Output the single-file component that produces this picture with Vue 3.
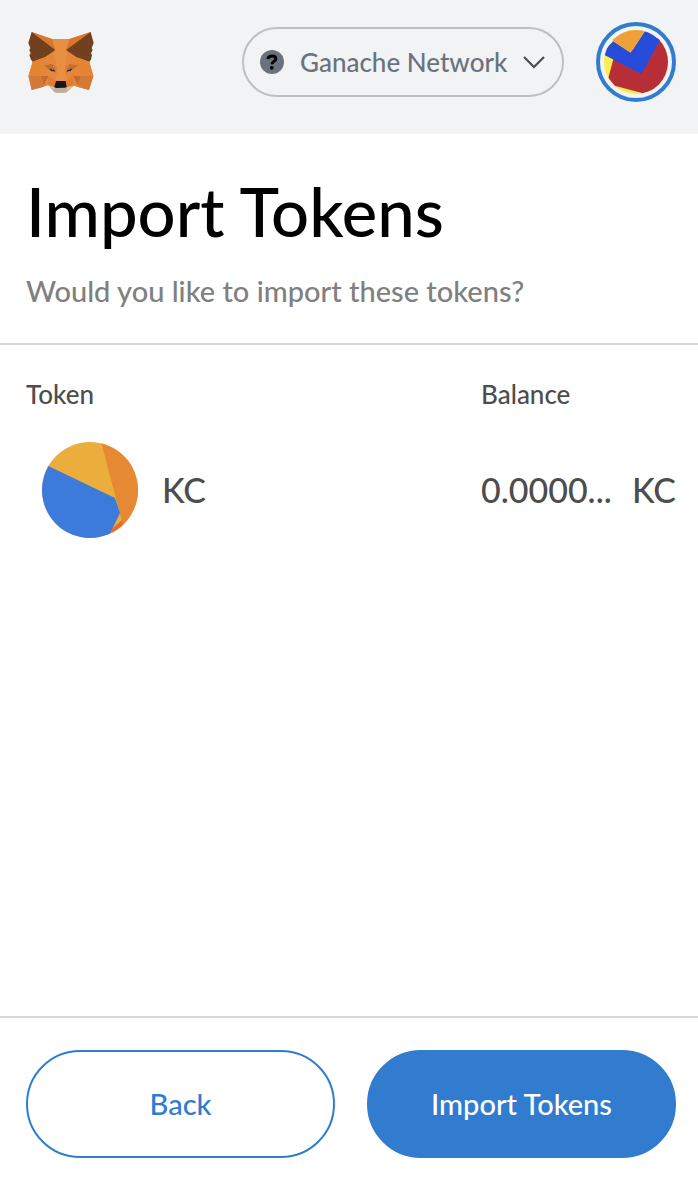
<script setup>
const tokens = [{ symbol: 'KC', balance: '0.0000...' }]
</script>

<template>
  <div class="popup">
    <header class="bar">
      <a class="logo" href="#" aria-label="Home">
        <svg viewBox="30 33 204 186" width="68" height="62" aria-hidden="true">
          <path fill="#e4873a" d="M47 36 108 57H160L224 36 220 125 232 168 219 210 172 197 152 217H116L97 196 47 210 37 168 50 125Z" />
          <path fill="#e88f43" d="M108 57H160L148 140 152 182H118L122 140Z" />
          <path fill="#d9772f" d="M47 36 108 57 118 90ZM224 36 160 57 150 90Z" />
          <path fill="#70401f" d="M47 36 118 90 86 112 50 125 45 119 40 105 44 100 40 90 43 84 37 69ZM224 36 150 90 182 112 220 125 225 119 228 105 225 100 230 90 227 84 233 69Z" />
          <path fill="#e58532" d="M50 125 86 112 82 136 75 168 38 168ZM220 125 182 112 187 136 195 168H232Z" />
          <path fill="#d57a36" d="M38 168H75L84 200 47 210ZM232 168H195L185 200 219 210Z" />
          <path fill="#c56b30" d="M75 168H97L84 196ZM195 168H172L185 196Z" />
          <path fill="#df7d35" d="M97 168 118 182 116 200 97 196ZM172 168 152 182 153 200 172 197Z" />
          <path fill="#c66e32" d="M82 136 110 132 121 160 116 154 97 147ZM187 136 160 132 149 160 154 154 173 147Z" />
          <path fill="#d9783a" d="M110 132 122 140 121 164ZM160 132 148 140 149 164Z" />
          <path fill="#263347" d="M99 146 112 147 118 155 105 153ZM170 146 157 147 151 155 164 153Z" />
          <path fill="#8999a1" d="M106 147H112L111 151ZM163 147H157L158 151Z" />
          <path fill="#d6c6b6" d="M97 196 115 202H153L172 197 153 213 149 218H120L115 212Z" />
          <path fill="#bfae9e" d="M115 203H153L154 212 148 218H120L114 212Z" />
          <path fill="#161616" d="M120 183H149L152 201 148 203 119 204 115 201Z" />
        </svg>
      </a>
      <button class="network" type="button" aria-haspopup="listbox">
        <svg class="help" viewBox="0 0 24 24" width="24" height="24" aria-hidden="true">
          <circle cx="12" cy="12" r="12" fill="#6a737d" />
          <path d="M7.8 9C8.3 6.8 9.8 6.1 12 6.1 14.4 6.1 15.9 7.2 15.9 9 15.9 11.4 12 11.2 12 14.2" fill="none" stroke="#000" stroke-width="3" />
          <circle cx="11.8" cy="17.8" r="1.9" />
        </svg>
        <span class="network-name">Ganache Network</span>
        <svg viewBox="0 0 24 14" width="24" height="14" aria-hidden="true">
          <path d="M2 2 12 12 22 2" fill="none" stroke="#4d4d4d" stroke-width="2.2" />
        </svg>
      </button>
      <button class="account" type="button" aria-label="Account menu">
        <svg viewBox="48 48 192 192" width="64" height="64" aria-hidden="true">
          <path fill="#f8ef4e" d="M48 48H240V240H48Z" />
          <path fill="#b82e36" d="M76 136 215 70 250 90V250H180L165 238 80 215 61 192Z" />
          <path fill="#274cda" d="M40 118 76 82 128 116 173 48 230 54 160 180Z" />
          <path fill="#efa139" d="M68 76 128 116 178 40H90Z" />
        </svg>
      </button>
    </header>

    <section class="intro">
      <h1>Import Tokens</h1>
      <p>Would you like to import these tokens?</p>
    </section>

    <main class="content">
      <table class="tokens">
        <thead>
          <tr>
            <th scope="col">Token</th>
            <th class="balance" scope="col">Balance</th>
          </tr>
        </thead>
        <tbody>
          <tr v-for="token in tokens" :key="token.symbol">
            <td>
              <div class="token">
                <svg viewBox="0 0 96 96" width="96" height="96" aria-hidden="true">
                  <path fill="#ebad3c" d="M0 0H96V96H0Z" />
                  <path fill="#e58a32" d="M58 -4H96V96H84L80 79Z" />
                  <path fill="#3c7adb" d="M-4 19 73 56 78 71 66 96H-4Z" />
                  <path fill="#eb672d" d="M71 86 80 78 84 96H66Z" />
                </svg>
                <span>{{ token.symbol }}</span>
              </div>
            </td>
            <td class="balance">
              <div class="amount">
                <span>{{ token.balance }}</span>
                <span>{{ token.symbol }}</span>
              </div>
            </td>
          </tr>
        </tbody>
      </table>
    </main>

    <footer class="actions">
      <button class="action secondary" type="button">Back</button>
      <button class="action primary" type="button">Import Tokens</button>
    </footer>
  </div>
</template>

<style>
body {
  margin: 0;
  background: #fff;
}
</style>

<style scoped>
.popup {
  display: flex;
  flex-direction: column;
  box-sizing: border-box;
  min-height: 100vh;
  font-family: Lato, "Open Sans", sans-serif;
  font-weight: 500;
  color: #4d4d4d;
}

button {
  box-sizing: border-box;
  margin: 0;
  font-family: inherit;
  font-weight: inherit;
  cursor: pointer;
}

svg {
  display: block;
  flex: none;
}

.bar {
  display: flex;
  align-items: center;
  gap: 32px;
  padding: 22px 22px 32px 26px;
  background: #f2f3f4;
}

.logo {
  margin-right: auto;
}

.network {
  display: flex;
  align-items: center;
  width: 322px;
  height: 70px;
  padding: 0 16px;
  border: 2px solid #bbc0c5;
  border-radius: 35px;
  background: transparent;
  color: #6a737d;
  font-size: 26px;
  line-height: 36px;
}

.network-name {
  flex: 1;
  padding-left: 16px;
  text-align: left;
  white-space: nowrap;
}

.account {
  width: 80px;
  height: 80px;
  padding: 4px;
  border: 4px solid #317ccf;
  border-radius: 50%;
  background: #f2f3f4;
}

.account svg,
.token svg {
  border-radius: 50%;
}

.intro {
  padding: 31px 26px;
  border-bottom: 2px solid #d2d8dd;
}

h1 {
  margin: 0;
  color: #000;
  font-size: 67px;
  font-weight: inherit;
  line-height: 92px;
}

p {
  margin: 13px 0 0;
  color: #808080;
  font-size: 29px;
  line-height: 42px;
}

.content {
  flex: 1;
  padding: 32px 22px 32px 26px;
}

.tokens {
  width: 100%;
  border-collapse: collapse;
}

th {
  padding: 0;
  font-size: 26px;
  font-weight: inherit;
  line-height: 34px;
  text-align: left;
}

td {
  padding: 31px 0 0;
  font-size: 34px;
  line-height: 48px;
}

.balance {
  width: 195px;
}

.token {
  display: flex;
  align-items: center;
  gap: 24px;
  padding-left: 16px;
}

.amount {
  display: flex;
  justify-content: space-between;
}

.actions {
  display: flex;
  gap: 32px;
  padding: 32px 22px 26px 26px;
  border-top: 2px solid #d2d8dd;
}

.action {
  flex: 1;
  height: 108px;
  border: 2px solid #317ccf;
  border-radius: 54px;
  font-size: 29px;
  line-height: 40px;
}

.secondary {
  background: #fff;
  color: #317ccf;
}

.primary {
  background: #317ccf;
  color: #fff;
}
</style>
